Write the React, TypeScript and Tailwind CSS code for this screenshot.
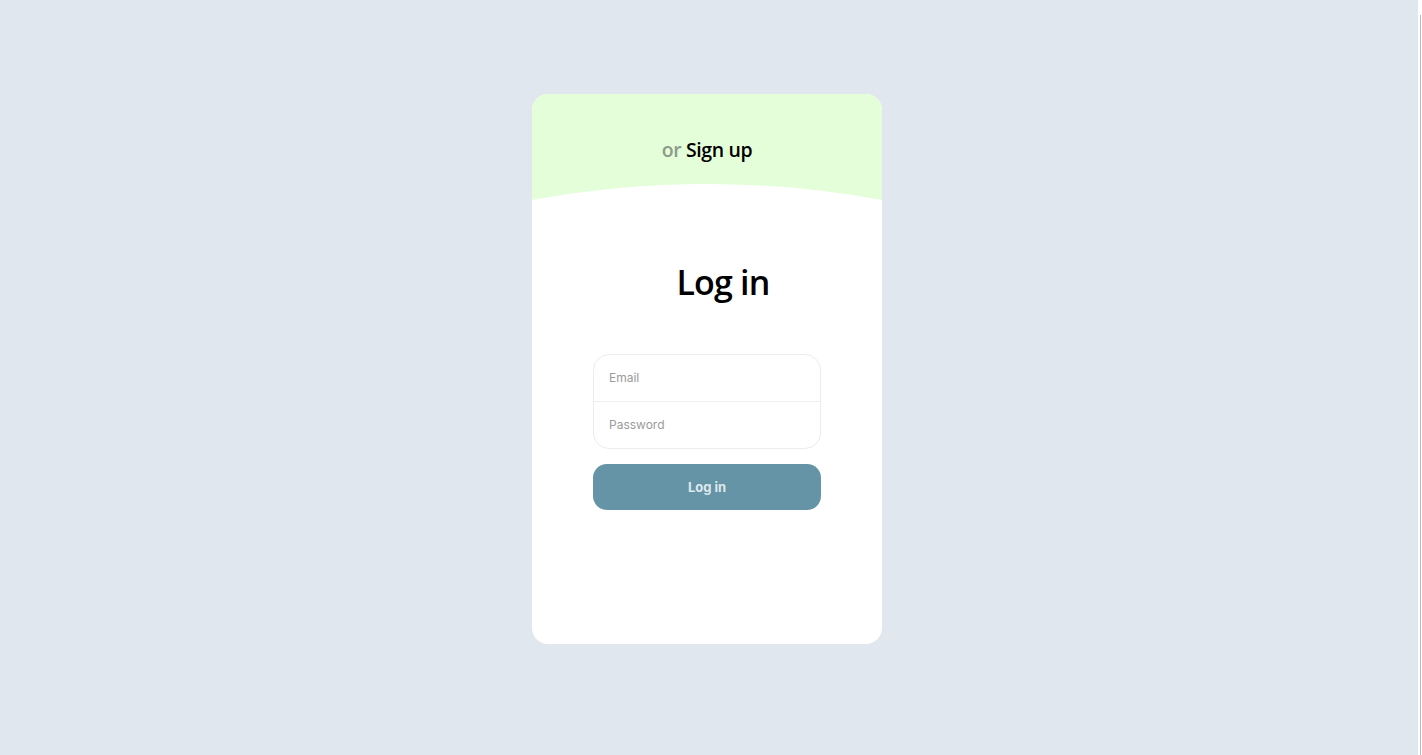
export default function App() {
  return (
    <div className="flex h-[755px] w-full overflow-hidden bg-[#e0e7ee]">
      <main className="flex flex-1 justify-center pr-[4px] pt-[94px]">
        <div className="flex h-[550px] w-[350px] flex-col overflow-hidden rounded-2xl bg-white">
          <div className="relative flex h-[106px] shrink-0 justify-center bg-[#e4fed9] pt-[42px]">
            <p className="font-['Open_Sans',sans-serif] text-[19.5px] font-semibold leading-[28px] tracking-[-0.4px]">
              <span className="text-[#8c9a89]">or</span>{" "}
              <span className="text-black">Sign up</span>
            </p>
            <svg
              className="absolute bottom-0 left-0"
              width="350"
              height="18"
              viewBox="0 0 350 18"
            >
              <path d="M0 18 Q175 -14 350 18 Z" fill="#ffffff" />
            </svg>
          </div>
          <div className="flex flex-1 flex-col items-center">
            <h1 className="mt-[58px] translate-x-[16px] font-['Open_Sans',sans-serif] text-[34px] font-semibold leading-[48px] tracking-[-0.8px] text-black">
              Log in
            </h1>
            <form className="mt-[48px] flex w-[228px] flex-col font-['Inter',sans-serif]">
              <div className="flex flex-col overflow-hidden rounded-2xl border border-[#ececec]">
                <input
                  placeholder="Email"
                  className="h-[46px] px-[15px] pb-px text-[12px] text-gray-700 outline-none placeholder:text-[#9b9b9b]"
                />
                <div className="h-px bg-[#efefef]" />
                <input
                  type="password"
                  placeholder="Password"
                  className="h-[46px] px-[15px] pb-px text-[12px] text-gray-700 outline-none placeholder:text-[#9b9b9b]"
                />
              </div>
              <button
                type="button"
                className="mt-[15px] h-[46px] rounded-[14px] bg-[#6594a6] pt-[2px] text-[13px] font-bold text-[#dfe9ed]"
              >
                Log in
              </button>
            </form>
          </div>
        </div>
      </main>
      <div className="flex w-[4px] shrink-0 bg-white pt-[15px]">
        <div className="ml-[2px] w-px bg-[#b9b9b9]" />
      </div>
    </div>
  );
}
